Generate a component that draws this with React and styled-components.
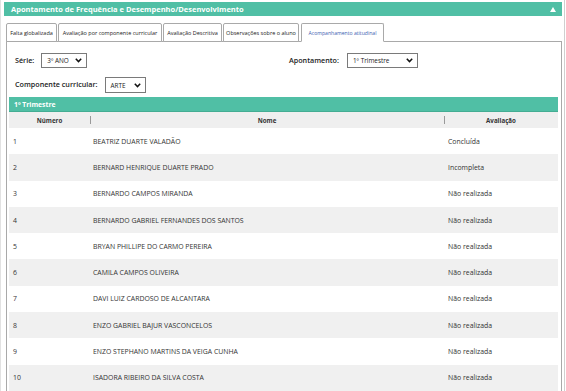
import React from 'react';
import styled, { createGlobalStyle } from 'styled-components';

const GlobalStyle = createGlobalStyle`
  body {
    margin: 0;
    background: #fff;
    font-family: "Open Sans", "Liberation Sans", sans-serif;
    color: #333;
  }
`;

const Frame = styled.div`
  width: 559px;
  min-height: 391px;
  padding: 2px 2px 0 2px;
  border-left: 1px solid #e2e2e2;
  border-right: 1px solid #cfcfcf;
`;

const TitleBar = styled.div`
  height: 14px;
  background: #50bfa5;
  display: flex;
  align-items: center;
  justify-content: space-between;
  padding: 0 6px 0 7px;
  margin-left: 1px;
  color: #fff;
  font-weight: 700;
  font-size: 7.5px;
`;

const Caret = styled.span`
  width: 0;
  height: 0;
  border-left: 3px solid transparent;
  border-right: 3px solid transparent;
  border-bottom: 5px solid #fff;
`;

const TabBar = styled.div`
  display: flex;
  gap: 1px;
  margin: 7px 0 -1px 3px;
  position: relative;
  z-index: 1;
`;

const Tab = styled.div`
  width: ${p => p.$w}px;
  height: 19px;
  box-sizing: border-box;
  display: flex;
  align-items: center;
  justify-content: center;
  padding-top: 1px;
  border: 1px solid #a9a9a9;
  border-bottom: 1px solid ${p => (p.$active ? '#fff' : '#a9a9a9')};
  border-radius: 2px 2px 0 0;
  background: #fff;
  font-size: ${p => (p.$active ? 5.1 : 5.5)}px;
  color: ${p => (p.$active ? '#3b5db0' : '#222')};
  margin-left: ${p => (p.$active ? 1 : 0)}px;
  white-space: nowrap;
`;

const Panel = styled.div`
  margin-left: 3px;
  border: 1px solid #a9a9a9;
  border-bottom: none;
  padding: 11px 2px 0 2px;
  min-height: 360px;
`;

const Filters = styled.div`
  display: grid;
  grid-template-columns: 274px auto;
  row-gap: 9px;
  padding-left: 6px;
`;

const Field = styled.div`
  display: flex;
  align-items: center;
  gap: ${p => p.$gap || 7}px;
`;

const Label = styled.span`
  font-size: 7.2px;
  font-weight: 600;
  color: #222;
  line-height: 1;
`;

const Select = styled.div`
  width: ${p => p.$w}px;
  height: ${p => p.$h || 15}px;
  box-sizing: border-box;
  border: 1px solid #7a7a7a;
  background: #fff;
  display: flex;
  align-items: center;
  justify-content: space-between;
  padding: 0 4px 0 5px;
  font-size: 6.4px;
  color: #222;
`;

const Chevron = () => (
  <svg width="7" height="5" viewBox="0 0 7 5">
    <path d="M0.8 0.8 L3.5 3.6 L6.2 0.8" fill="none" stroke="#111" strokeWidth="1.5" />
  </svg>
);

const Section = styled.div`
  margin: 4px 1px 0 0;
`;

const SectionBar = styled.div`
  height: 14px;
  background: #50bfa5;
  border-bottom: 1px solid #44ad93;
  color: #fff;
  font-weight: 700;
  font-size: 6.8px;
  display: flex;
  align-items: center;
  padding-left: 5px;
`;

const cols = '81px 354px 1fr';

const HeadRow = styled.div`
  display: grid;
  grid-template-columns: ${cols};
  height: 16px;
  background: #efefef;
  align-items: center;
`;

const HeadCell = styled.div`
  position: relative;
  font-size: 6.2px;
  font-weight: 700;
  color: #333;
  height: 100%;
  display: flex;
  align-items: center;
  justify-content: center;
  ${p => p.$divider && `
    &::before {
      content: '';
      position: absolute;
      left: 0;
      top: 4px;
      height: 8px;
      border-left: 1px solid #999;
    }
  `}
`;

const Row = styled.div`
  display: grid;
  grid-template-columns: ${cols};
  height: 26.3px;
  align-items: center;
  background: ${p => (p.$alt ? '#f0f0f0' : '#fff')};
`;

const Cell = styled.div`
  font-size: 6.9px;
  color: #333;
  padding-left: ${p => p.$pad || 4}px;
  white-space: nowrap;
`;

const students = [
  ['1', 'BEATRIZ DUARTE VALADÃO', 'Concluída'],
  ['2', 'BERNARD HENRIQUE DUARTE PRADO', 'Incompleta'],
  ['3', 'BERNARDO CAMPOS MIRANDA', 'Não realizada'],
  ['4', 'BERNARDO GABRIEL FERNANDES DOS SANTOS', 'Não realizada'],
  ['5', 'BRYAN PHILLIPE DO CARMO PEREIRA', 'Não realizada'],
  ['6', 'CAMILA CAMPOS OLIVEIRA', 'Não realizada'],
  ['7', 'DAVI LUIZ CARDOSO DE ALCANTARA', 'Não realizada'],
  ['8', 'ENZO GABRIEL BAJUR VASCONCELOS', 'Não realizada'],
  ['9', 'ENZO STEPHANO MARTINS DA VEIGA CUNHA', 'Não realizada'],
  ['10', 'ISADORA RIBEIRO DA SILVA COSTA', 'Não realizada'],
];

const tabs = [
  ['Falta globalizada', 51],
  ['Avaliação por componente curricular', 104],
  ['Avaliação Descritiva', 59],
  ['Observações sobre o aluno', 76],
  ['Acompanhamento atitudinal', 83],
];

export default function App() {
  return (
    <>
      <GlobalStyle />
      <Frame>
        <TitleBar>
          <span>Apontamento de Frequência e Desempenho/Desenvolvimento</span>
          <Caret />
        </TitleBar>
        <TabBar>
          {tabs.map(([t, w], i) => (
            <Tab key={t} $w={w} $active={i === tabs.length - 1}>{t}</Tab>
          ))}
        </TabBar>
        <Panel>
          <Filters>
            <Field>
              <Label>Série:</Label>
              <Select $w={46}>
                <span>3º ANO</span>
                <Chevron />
              </Select>
            </Field>
            <Field $gap={8}>
              <Label>Apontamento:</Label>
              <Select $w={71}>
                <span>1º Trimestre</span>
                <Chevron />
              </Select>
            </Field>
            <Field>
              <Label>Componente curricular:</Label>
              <Select $w={41} $h={16}>
                <span>ARTE</span>
                <Chevron />
              </Select>
            </Field>
          </Filters>
          <Section>
            <SectionBar>1º Trimestre</SectionBar>
            <HeadRow>
              <HeadCell>Número</HeadCell>
              <HeadCell $divider>Nome</HeadCell>
              <HeadCell $divider>Avaliação</HeadCell>
            </HeadRow>
            {students.map(([n, name, st], i) => (
              <Row key={n} $alt={i % 2 === 1}>
                <Cell>{n}</Cell>
                <Cell $pad={3}>{name}</Cell>
                <Cell>{st}</Cell>
              </Row>
            ))}
          </Section>
        </Panel>
      </Frame>
    </>
  );
}
